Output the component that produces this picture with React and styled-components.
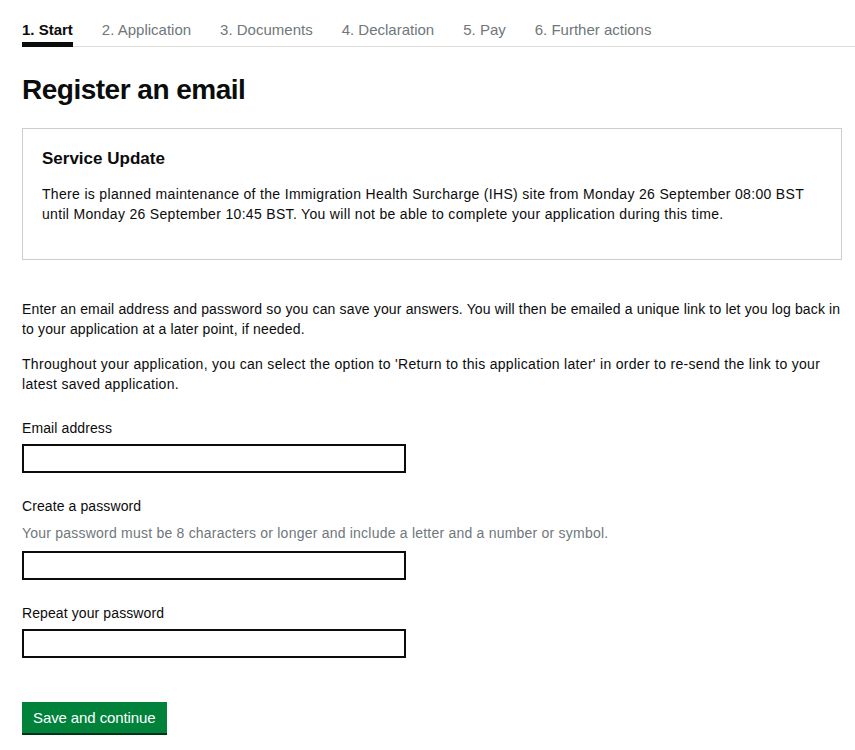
import React from 'react';
import styled, { createGlobalStyle } from 'styled-components';

const textColour = '#0b0c0c';
const secondary = '#6f777b';
const border = '#cccccc';
const green = '#00823b';

const GlobalStyle = createGlobalStyle`
  body {
    margin: 0;
    background: #fff;
    color: ${textColour};
    font-family: "Liberation Sans", Arial, sans-serif;
  }
`;

const Page = styled.div`
  padding: 20px 13px 20px 22px;
`;

const Tabs = styled.nav`
  display: flex;
  gap: 29px;
  border-bottom: 1px solid #dedede;
  margin-right: -13px;
`;

const Tab = styled.div`
  font-size: 15px;
  line-height: 20px;
  padding-bottom: 2px;
  color: ${p => (p.active ? textColour : secondary)};
  font-weight: ${p => (p.active ? 700 : 400)};
  border-bottom: 5px solid ${p => (p.active ? textColour : 'transparent')};
  margin-bottom: -1px;
`;

const Title = styled.h1`
  margin: 27px 0 22px;
  font-size: 28px;
  line-height: 32px;
  font-weight: 700;
  letter-spacing: -0.5px;
`;

const Notice = styled.section`
  border: 1px solid ${border};
  padding: 20px 19px 35px;
  margin-bottom: 39px;
`;

const NoticeHeading = styled.h2`
  margin: 0 0 15px;
  font-size: 17px;
  line-height: 20px;
  font-weight: 700;
`;

const Body = styled.p`
  margin: 0 0 15px;
  font-size: 14px;
  line-height: 20px;
  letter-spacing: ${p => p.spacing || 0.32}px;
`;

const NoticeBody = styled(Body)`
  margin: 0;
`;

const Intro = styled.div`
  margin-right: -13px;
  margin-bottom: 24px;
`;

const Field = styled.div`
  display: flex;
  flex-direction: column;
  margin-bottom: 23px;
`;

const Label = styled.label`
  font-size: 14px;
  line-height: 20px;
  letter-spacing: 0.1px;
  margin-bottom: ${p => (p.withHint ? 0 : 6)}px;
`;

const Hint = styled.span`
  font-size: 14px;
  line-height: 20px;
  letter-spacing: 0.22px;
  color: ${secondary};
  margin: 7px 0 8px;
`;

const Input = styled.input`
  box-sizing: border-box;
  width: 384px;
  height: 29px;
  border: 2px solid ${textColour};
  border-radius: 0;
  padding: 4px;
  font: inherit;
  font-size: 14px;
  outline: none;
`;

const Button = styled.button`
  align-self: flex-start;
  margin-top: 21px;
  background: ${green};
  color: #fff;
  border: 0;
  border-radius: 0;
  box-shadow: 0 2px 0 #003618;
  font-family: inherit;
  font-size: 15px;
  line-height: 20px;
  padding: 6px 11px 5px 11px;
  letter-spacing: -0.1px;
  cursor: pointer;
`;

const steps = ['1. Start', '2. Application', '3. Documents', '4. Declaration', '5. Pay', '6. Further actions'];

export default function App() {
  return (
    <>
      <GlobalStyle />
      <Page>
        <Tabs>
          {steps.map((s, i) => (
            <Tab key={s} active={i === 0}>{s}</Tab>
          ))}
        </Tabs>

        <Title>Register an email</Title>

        <Notice>
          <NoticeHeading>Service Update</NoticeHeading>
          <NoticeBody>
            There is planned maintenance of the Immigration Health Surcharge (IHS) site from Monday 26 September 08:00 BST
            until Monday 26 September 10:45 BST. You will not be able to complete your application during this time.
          </NoticeBody>
        </Notice>

        <Intro>
          <Body spacing={0.15}>
            Enter an email address and password so you can save your answers. You will then be emailed a unique link to let you log back in
            <br />
            to your application at a later point, if needed.
          </Body>
          <Body spacing={0.3}>
            Throughout your application, you can select the option to 'Return to this application later' in order to re-send the link to your
            <br />
            latest saved application.
          </Body>
        </Intro>

        <Field>
          <Label htmlFor="email">Email address</Label>
          <Input id="email" type="email" />
        </Field>

        <Field>
          <Label htmlFor="password" withHint>Create a password</Label>
          <Hint>Your password must be 8 characters or longer and include a letter and a number or symbol.</Hint>
          <Input id="password" type="password" />
        </Field>

        <Field>
          <Label htmlFor="repeat">Repeat your password</Label>
          <Input id="repeat" type="password" />
        </Field>

        <Button type="button">Save and continue</Button>
      </Page>
    </>
  );
}
